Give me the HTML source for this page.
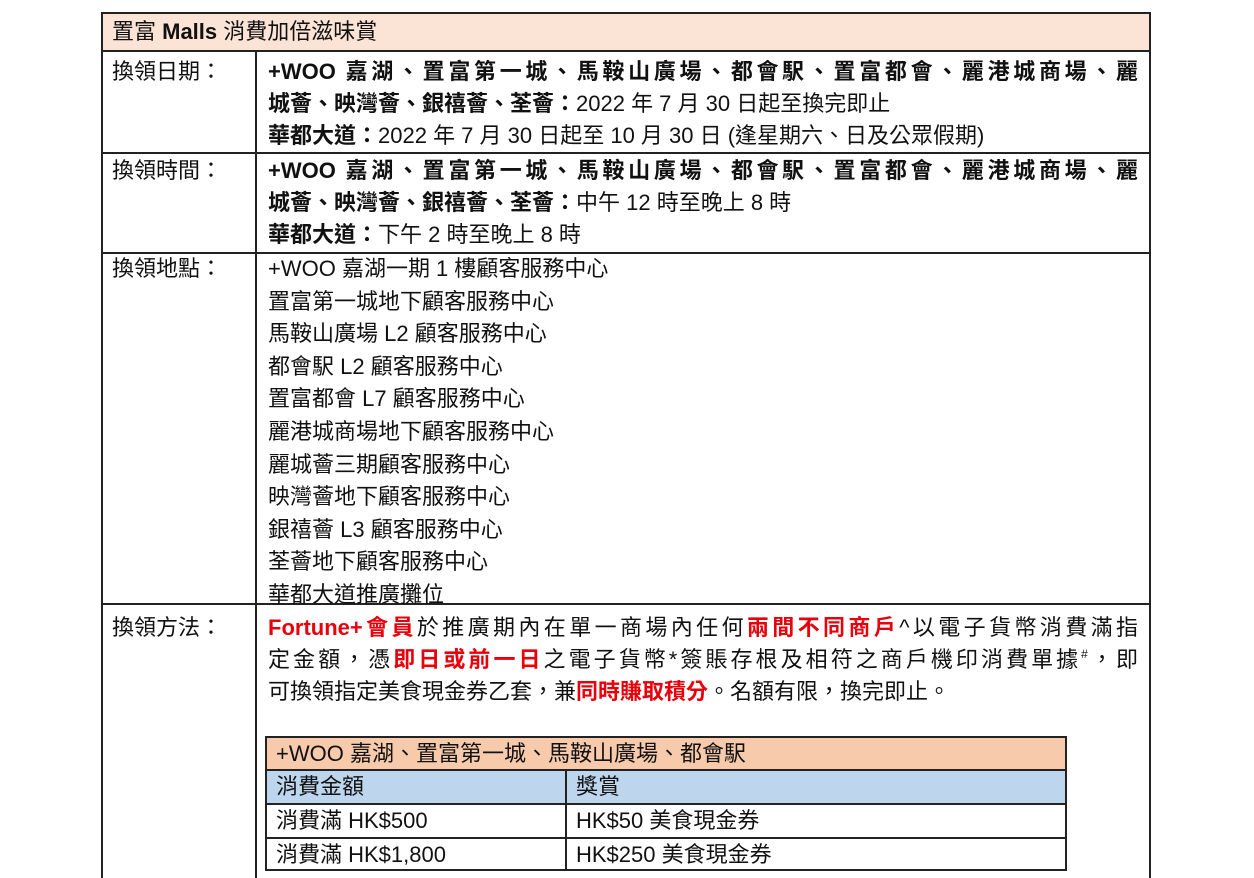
<!DOCTYPE html>
<html><head><meta charset="utf-8"><style>
body{margin:0;width:1254px;height:878px;background:#fff;position:relative;overflow:hidden;font-family:"Liberation Sans","Noto Sans CJK TC",sans-serif;font-size:22px;color:#111}
.l{position:absolute;line-height:32px;height:32px;white-space:nowrap}
.j{text-align:justify;text-align-last:justify;width:870px}
.b{font-weight:bold}
.r{color:#e8000b;font-weight:bold}
.h{position:absolute;background:#222}
.s{font-size:12px;line-height:0;position:relative;top:-9px}
</style></head><body>
<div style="position:absolute;left:102px;top:13px;width:1048px;height:37px;background:#fbe4d5"></div>
<div class="h" style="left:101px;top:12px;width:1050px;height:2px"></div>
<div class="h" style="left:101px;top:50px;width:1050px;height:2px"></div>
<div class="h" style="left:101px;top:152px;width:1050px;height:2px"></div>
<div class="h" style="left:101px;top:252px;width:1050px;height:2px"></div>
<div class="h" style="left:101px;top:603px;width:1050px;height:2px"></div>
<div class="h" style="left:101px;top:12px;width:2px;height:866px"></div>
<div class="h" style="left:1149px;top:12px;width:2px;height:866px"></div>
<div class="h" style="left:255px;top:50px;width:2px;height:828px"></div>

<div class="l" style="left:112px;top:16px">置富 <b>Malls</b> 消費加倍滋味賞</div>

<div class="l" style="left:112px;top:56px">換領日期：</div>
<div class="l b j" style="left:268px;top:56px">+WOO 嘉湖、置富第一城、馬鞍山廣場、都會駅、置富都會、麗港城商場、麗</div>
<div class="l" style="left:268px;top:88px"><b>城薈、映灣薈、銀禧薈、荃薈：</b>2022 年 7 月 30 日起至換完即止</div>
<div class="l" style="left:268px;top:120px"><b>華都大道：</b>2022 年 7 月 30 日起至 10 月 30 日 (逢星期六、日及公眾假期)</div>

<div class="l" style="left:112px;top:155px">換領時間：</div>
<div class="l b j" style="left:268px;top:155px">+WOO 嘉湖、置富第一城、馬鞍山廣場、都會駅、置富都會、麗港城商場、麗</div>
<div class="l" style="left:268px;top:187px"><b>城薈、映灣薈、銀禧薈、荃薈：</b>中午 12 時至晚上 8 時</div>
<div class="l" style="left:268px;top:219px"><b>華都大道：</b>下午 2 時至晚上 8 時</div>

<div class="l" style="left:112px;top:253px">換領地點：</div>
<div class="l" style="left:268px;top:253px;height:auto;line-height:32.6px;white-space:pre">+WOO 嘉湖一期 1 樓顧客服務中心
置富第一城地下顧客服務中心
馬鞍山廣場 L2 顧客服務中心
都會駅 L2 顧客服務中心
置富都會 L7 顧客服務中心
麗港城商場地下顧客服務中心
麗城薈三期顧客服務中心
映灣薈地下顧客服務中心
銀禧薈 L3 顧客服務中心
荃薈地下顧客服務中心
華都大道推廣攤位</div>

<div class="l" style="left:112px;top:612px">換領方法：</div>
<div class="l j" style="left:268px;top:612px"><span class="r">Fortune+會員</span>於推廣期內在單一商場內任何<span class="r">兩間不同商戶</span>^以電子貨幣消費滿指</div>
<div class="l j" style="left:268px;top:644px">定金額，憑<span class="r">即日或前一日</span>之電子貨幣*簽賬存根及相符之商戶機印消費單據<span class="s">#</span>，即</div>
<div class="l" style="left:268px;top:676px">可換領指定美食現金券乙套，兼<span class="r">同時賺取積分</span>。名額有限，換完即止。</div>

<div style="position:absolute;left:266px;top:737px;width:800px;height:33px;background:#f7caac"></div>
<div style="position:absolute;left:266px;top:770px;width:800px;height:34px;background:#bdd6ee"></div>
<div class="h" style="left:265px;top:736px;width:802px;height:2px"></div>
<div class="h" style="left:265px;top:769px;width:802px;height:2px"></div>
<div class="h" style="left:265px;top:803px;width:802px;height:2px"></div>
<div class="h" style="left:265px;top:837px;width:802px;height:2px"></div>
<div class="h" style="left:265px;top:869px;width:802px;height:2px"></div>
<div class="h" style="left:265px;top:736px;width:2px;height:135px"></div>
<div class="h" style="left:1065px;top:736px;width:2px;height:135px"></div>
<div class="h" style="left:565px;top:769px;width:2px;height:102px"></div>
<div class="l" style="left:276px;top:738px">+WOO 嘉湖、置富第一城、馬鞍山廣場、都會駅</div>
<div class="l" style="left:276px;top:771px">消費金額</div>
<div class="l" style="left:576px;top:771px">獎賞</div>
<div class="l" style="left:276px;top:805px">消費滿 HK$500</div>
<div class="l" style="left:576px;top:805px">HK$50 美食現金券</div>
<div class="l" style="left:276px;top:839px">消費滿 HK$1,800</div>
<div class="l" style="left:576px;top:839px">HK$250 美食現金券</div>
</body></html>
